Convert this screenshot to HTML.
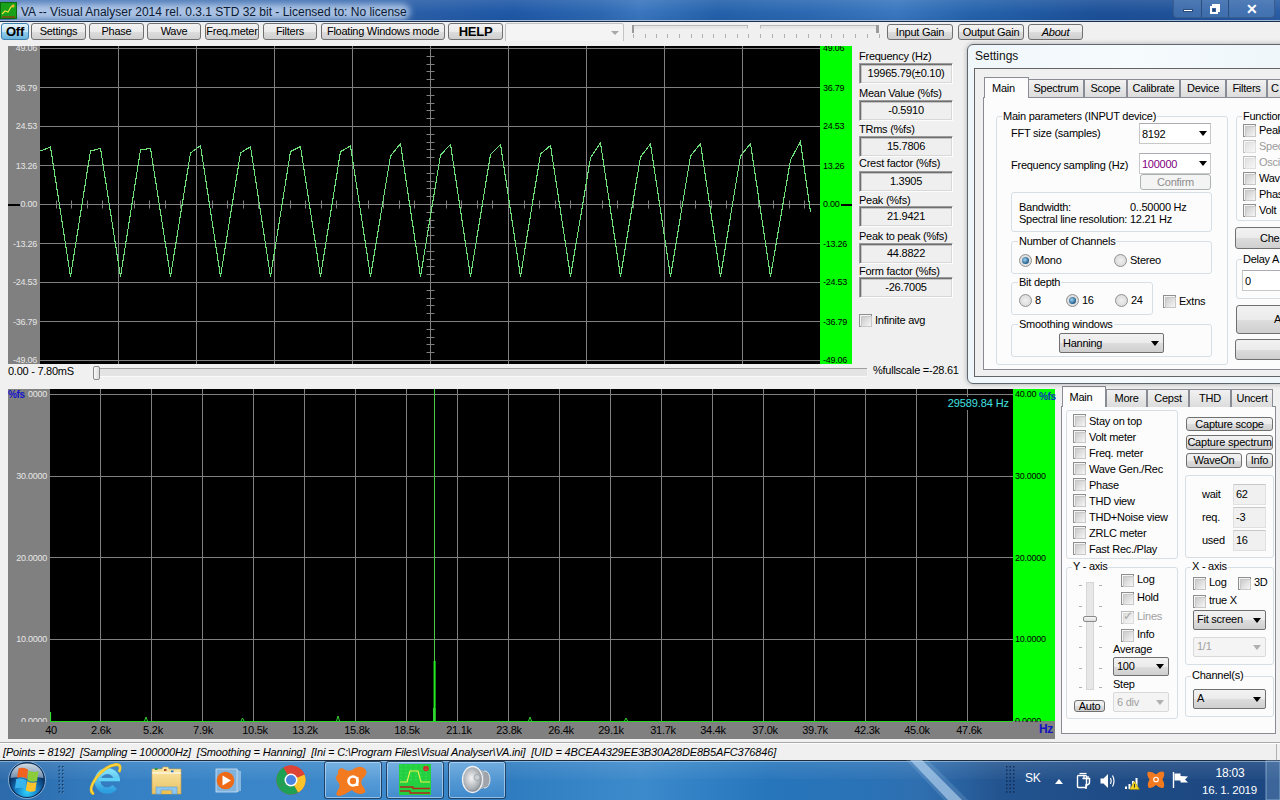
<!DOCTYPE html>
<html><head><meta charset="utf-8"><title>VA</title>
<style>
*{box-sizing:border-box;margin:0;padding:0}
html,body{width:1280px;height:800px;overflow:hidden;background:#f0f0f0;font-family:"Liberation Sans",sans-serif;font-size:11px;letter-spacing:-0.25px;color:#000;position:relative}
.a{position:absolute}
.btn{position:absolute;border:1px solid #707070;border-radius:3px;background:linear-gradient(#f2f2f2 0%,#ebebeb 50%,#dddddd 51%,#cfcfcf 100%);text-align:center;font-size:11px;line-height:15px;white-space:nowrap;overflow:hidden}
.t{position:absolute;white-space:nowrap;transform:translateY(1px)}
.s2{transform:translateY(2px)}
.cb{position:absolute;width:13px;height:13px;border:1px solid #8e8f8f;background:linear-gradient(135deg,#f4f4f4,#f4f4f4)}
.cb::after{content:"";position:absolute;left:1px;top:1px;width:9px;height:9px;background:linear-gradient(135deg,#cbcbcb,#f6f6f6);border:1px solid #c8c8c8}
.box{position:absolute;border:1px solid #fdfdfd;border-top-color:#9a9a9a;border-left-color:#9a9a9a;background:#efefef;box-shadow:inset 1px 1px 0 #6e6e6e,inset 2px 2px 0 #c4c4c4,inset -1px -1px 0 #d8d8d8;text-align:center;font-size:11px}
.grp{position:absolute;border:1px solid #d5dfe5;border-radius:3px}
.combo{position:absolute;border:1px solid #acacac;border-radius:2px;background:linear-gradient(#f2f2f2,#e5e5e5);font-size:11px}
.tab{position:absolute;border:1px solid #898c95;border-bottom:none;background:linear-gradient(#f2f2f2,#dcdcdc);text-align:center;font-size:11px}
</style></head><body>
<div class="a" style="left:0;top:0;width:1280px;height:21px;background:linear-gradient(90deg,#4a78b8 0%,#3c6db0 20%,#2a5fa8 32%,#1f58a6 40%,#2d68b2 47%,#3a76be 50%,#2461ab 56%,#2c69b2 63%,#3977bf 70%,#2563ac 76%,#1c5099 86%,#1f5299 92%,#2a5da4 100%)"></div>
<div class="a" style="left:0;top:0;width:1280px;height:21px;background:linear-gradient(rgba(255,255,255,0.10),rgba(255,255,255,0) 60%,rgba(0,0,0,0.05))"></div>
<div class="a" style="left:12px;top:4px;width:398px;height:16px;border-radius:8px;background:rgba(205,222,244,0.75);filter:blur(3px)"></div>
<div class="a" style="left:0;top:21px;width:1280px;height:1px;background:#1b2f4e"></div>
<div class="a" style="left:0;top:20px;width:1280px;height:1px;background:#9fb9d8"></div>
<svg class="a" style="left:0;top:2px" width="17" height="17"><rect x="0" y="0" width="17" height="17" fill="#1aa11a"/><rect x="0.5" y="0.5" width="16" height="16" fill="none" stroke="#0b6a0b"/><path d="M2 12L5 9L8 10L11 5L14 3" stroke="#e8e040" stroke-width="1.2" fill="none"/><path d="M2 15H15" stroke="#a03010" stroke-width="1.2"/><circle cx="13" cy="4" r="1.5" fill="#ffb030"/></svg>
<div class="t" style="left:21px;top:4px;font-size:12px;line-height:14px;letter-spacing:0;color:#0a1a33">VA -- Visual Analyser 2014 rel. 0.3.1 STD 32 bit - Licensed to: No license</div>
<div class="a" style="left:1173px;top:0;width:102px;height:18px;border:1px solid #3a5d8f;border-top:none;border-radius:0 0 4px 4px;background:rgba(120,160,210,0.35)"></div>
<div class="a" style="left:1201px;top:0;width:1px;height:17px;background:#2c4d7c"></div>
<div class="a" style="left:1228px;top:0;width:1px;height:17px;background:#2c4d7c"></div>
<div class="a" style="left:1183px;top:9px;width:10px;height:3px;background:#fff;border:1px solid #2a4a78"></div>
<div class="a" style="left:1212px;top:4px;width:8px;height:8px;border:2px solid #fff;border-left-width:2px"></div><div class="a" style="left:1210px;top:6px;width:8px;height:8px;border:2px solid #fff;background:#3a66a0"></div><div class="a" style="left:1213px;top:9px;width:2px;height:2px;background:#1d3d66"></div>
<div class="t" style="left:1246px;top:0px;font-size:14px;font-weight:bold;color:#fff;letter-spacing:0">✕</div>
<div class="btn" style="left:1px;top:23px;width:28px;height:17px;border-color:#3c7fb1;background:linear-gradient(#e5f4fc 0%,#c4e5f6 50%,#98d1ef 51%,#68b3db 100%);font-weight:bold;font-size:13px;line-height:15px">Off</div>
<div class="btn" style="left:31px;top:23px;width:55px;height:17px">Settings</div>
<div class="btn" style="left:89px;top:23px;width:55px;height:17px">Phase</div>
<div class="btn" style="left:147px;top:23px;width:54px;height:17px">Wave</div>
<div class="btn" style="left:205px;top:23px;width:54px;height:17px">Freq.meter</div>
<div class="btn" style="left:263px;top:23px;width:54px;height:17px">Filters</div>
<div class="btn" style="left:321px;top:23px;width:124px;height:17px">Floating Windows mode</div>
<div class="btn" style="left:448px;top:23px;width:55px;height:17px;font-weight:bold;font-size:13px">HELP</div>
<div class="a" style="left:505px;top:23px;width:119px;height:20px;border:1px solid #c3c3c3;border-radius:2px;background:#f4f4f4"></div>
<div class="a" style="left:611px;top:31px;width:0;height:0;border-left:4px solid transparent;border-right:4px solid transparent;border-top:4px solid #a8a8a8"></div>
<div class="a" style="left:633px;top:25px;width:115px;height:4px;border:1px solid #b8b8b8;border-bottom-color:#e8e8e8;background:#e6e6e6"></div>
<div class="a" style="left:633px;top:34px;width:1px;height:4px;background:#b0b0b0"></div>
<div class="a" style="left:645px;top:34px;width:1px;height:4px;background:#b0b0b0"></div>
<div class="a" style="left:656px;top:34px;width:1px;height:4px;background:#b0b0b0"></div>
<div class="a" style="left:667px;top:34px;width:1px;height:4px;background:#b0b0b0"></div>
<div class="a" style="left:679px;top:34px;width:1px;height:4px;background:#b0b0b0"></div>
<div class="a" style="left:691px;top:34px;width:1px;height:4px;background:#b0b0b0"></div>
<div class="a" style="left:702px;top:34px;width:1px;height:4px;background:#b0b0b0"></div>
<div class="a" style="left:713px;top:34px;width:1px;height:4px;background:#b0b0b0"></div>
<div class="a" style="left:725px;top:34px;width:1px;height:4px;background:#b0b0b0"></div>
<div class="a" style="left:737px;top:34px;width:1px;height:4px;background:#b0b0b0"></div>
<div class="a" style="left:748px;top:34px;width:1px;height:4px;background:#b0b0b0"></div>
<div class="a" style="left:760px;top:25px;width:119px;height:4px;border:1px solid #b8b8b8;border-bottom-color:#e8e8e8;background:#e6e6e6"></div>
<div class="a" style="left:760px;top:34px;width:1px;height:4px;background:#b0b0b0"></div>
<div class="a" style="left:772px;top:34px;width:1px;height:4px;background:#b0b0b0"></div>
<div class="a" style="left:784px;top:34px;width:1px;height:4px;background:#b0b0b0"></div>
<div class="a" style="left:796px;top:34px;width:1px;height:4px;background:#b0b0b0"></div>
<div class="a" style="left:808px;top:34px;width:1px;height:4px;background:#b0b0b0"></div>
<div class="a" style="left:820px;top:34px;width:1px;height:4px;background:#b0b0b0"></div>
<div class="a" style="left:831px;top:34px;width:1px;height:4px;background:#b0b0b0"></div>
<div class="a" style="left:843px;top:34px;width:1px;height:4px;background:#b0b0b0"></div>
<div class="a" style="left:855px;top:34px;width:1px;height:4px;background:#b0b0b0"></div>
<div class="a" style="left:867px;top:34px;width:1px;height:4px;background:#b0b0b0"></div>
<div class="a" style="left:879px;top:34px;width:1px;height:4px;background:#b0b0b0"></div>
<div class="a" style="left:632px;top:25px;width:2px;height:8px;background:#9a9a9a"></div>
<div class="a" style="left:876px;top:25px;width:3px;height:8px;background:#9a9a9a"></div>
<div class="btn" style="left:887px;top:24px;width:66px;height:16px;line-height:14px">Input Gain</div>
<div class="btn" style="left:958px;top:24px;width:66px;height:16px;line-height:14px">Output Gain</div>
<div class="btn" style="left:1028px;top:24px;width:55px;height:16px;line-height:14px;font-style:italic">About</div>
<div class="a" style="left:8px;top:46px;width:32px;height:318px;background:#808080"></div>
<div class="a" style="left:820px;top:46px;width:32px;height:318px;background:#00ff00"></div>
<svg class="a" style="left:40px;top:46px" width="780" height="318" viewBox="40 46 780 318"><rect x="40" y="46" width="780" height="318" fill="#000"/><path d="M40 48.5H820M40 87.5H820M40 126.5H820M40 165.5H820M40 204.5H820M40 243.5H820M40 282.5H820M40 321.5H820M40 360.5H820M118.5 46V364M196.5 46V364M274.5 46V364M352.5 46V364M430.5 46V364M508.5 46V364M586.5 46V364M664.5 46V364M742.5 46V364M56.5 200.5V208.5M71.5 200.5V208.5M87.5 200.5V208.5M102.5 200.5V208.5M134.5 200.5V208.5M149.5 200.5V208.5M165.5 200.5V208.5M180.5 200.5V208.5M212.5 200.5V208.5M227.5 200.5V208.5M243.5 200.5V208.5M258.5 200.5V208.5M290.5 200.5V208.5M305.5 200.5V208.5M321.5 200.5V208.5M336.5 200.5V208.5M368.5 200.5V208.5M383.5 200.5V208.5M399.5 200.5V208.5M414.5 200.5V208.5M446.5 200.5V208.5M461.5 200.5V208.5M477.5 200.5V208.5M492.5 200.5V208.5M524.5 200.5V208.5M539.5 200.5V208.5M555.5 200.5V208.5M570.5 200.5V208.5M602.5 200.5V208.5M617.5 200.5V208.5M633.5 200.5V208.5M648.5 200.5V208.5M680.5 200.5V208.5M695.5 200.5V208.5M711.5 200.5V208.5M726.5 200.5V208.5M758.5 200.5V208.5M773.5 200.5V208.5M789.5 200.5V208.5M804.5 200.5V208.5M426.5 56.5H434.5M426.5 64.5H434.5M426.5 71.5H434.5M426.5 79.5H434.5M426.5 95.5H434.5M426.5 103.5H434.5M426.5 110.5H434.5M426.5 118.5H434.5M426.5 134.5H434.5M426.5 142.5H434.5M426.5 149.5H434.5M426.5 157.5H434.5M426.5 173.5H434.5M426.5 181.5H434.5M426.5 188.5H434.5M426.5 196.5H434.5M426.5 212.5H434.5M426.5 220.5H434.5M426.5 227.5H434.5M426.5 235.5H434.5M426.5 251.5H434.5M426.5 259.5H434.5M426.5 266.5H434.5M426.5 274.5H434.5M426.5 290.5H434.5M426.5 298.5H434.5M426.5 305.5H434.5M426.5 313.5H434.5M426.5 329.5H434.5M426.5 337.5H434.5M426.5 344.5H434.5M426.5 352.5H434.5" stroke="#808080" stroke-width="1" fill="none"/><path d="M40.5 151.0 L50.5 147.0 L70.5 276.5 L90.5 151.0 L100.5 148.4 L120.5 276.5 L140.5 150.0 L150.5 148.4 L170.5 276.5 L190.5 153.0 L200.5 145.6 L220.5 276.5 L240.5 153.0 L250.5 146.6 L270.5 276.5 L290.5 151.6 L300.5 146.6 L320.5 276.5 L340.5 151.6 L350.5 146.0 L370.5 276.5 L390.5 156.0 L400.5 143.6 L420.5 276.5 L440.5 155.0 L450.5 144.4 L470.5 276.5 L490.5 154.4 L500.5 144.4 L520.5 276.5 L540.5 154.0 L550.5 145.4 L570.5 276.5 L590.5 158.0 L600.5 143.0 L620.5 276.5 L640.5 157.0 L650.5 144.0 L670.5 276.5 L690.5 156.0 L700.5 143.6 L720.5 276.5 L740.5 156.0 L750.5 143.6 L770.5 276.5 L790.5 160.0 L800.5 141.6 L810.5 212.0" stroke="#6ee07a" stroke-width="1.1" fill="none" stroke-linejoin="miter" shape-rendering="crispEdges"/></svg>
<div class="t" style="left:0;width:37px;text-align:right;top:42px;font-size:9px;line-height:11px;color:#e6e6e6">49.06</div>
<div class="t" style="left:823px;top:42px;font-size:9px;line-height:11px;color:#000">49.06</div>
<div class="t" style="left:0;width:37px;text-align:right;top:82px;font-size:9px;line-height:11px;color:#e6e6e6">36.79</div>
<div class="t" style="left:823px;top:82px;font-size:9px;line-height:11px;color:#000">36.79</div>
<div class="t" style="left:0;width:37px;text-align:right;top:120px;font-size:9px;line-height:11px;color:#e6e6e6">24.53</div>
<div class="t" style="left:823px;top:120px;font-size:9px;line-height:11px;color:#000">24.53</div>
<div class="t" style="left:0;width:37px;text-align:right;top:160px;font-size:9px;line-height:11px;color:#e6e6e6">13.26</div>
<div class="t" style="left:823px;top:160px;font-size:9px;line-height:11px;color:#000">13.26</div>
<div class="t" style="left:0;width:37px;text-align:right;top:198px;font-size:9px;line-height:11px;color:#e6e6e6">0.00</div>
<div class="t" style="left:823px;top:198px;font-size:9px;line-height:11px;color:#000">0.00</div>
<div class="t" style="left:0;width:37px;text-align:right;top:238px;font-size:9px;line-height:11px;color:#e6e6e6">-13.26</div>
<div class="t" style="left:823px;top:238px;font-size:9px;line-height:11px;color:#000">-13.26</div>
<div class="t" style="left:0;width:37px;text-align:right;top:276px;font-size:9px;line-height:11px;color:#e6e6e6">-24.53</div>
<div class="t" style="left:823px;top:276px;font-size:9px;line-height:11px;color:#000">-24.53</div>
<div class="t" style="left:0;width:37px;text-align:right;top:316px;font-size:9px;line-height:11px;color:#e6e6e6">-36.79</div>
<div class="t" style="left:823px;top:316px;font-size:9px;line-height:11px;color:#000">-36.79</div>
<div class="t" style="left:0;width:37px;text-align:right;top:354px;font-size:9px;line-height:11px;color:#e6e6e6">-49.06</div>
<div class="t" style="left:823px;top:354px;font-size:9px;line-height:11px;color:#000">-49.06</div>
<div class="a" style="left:0;top:41px;width:860px;height:5px;background:#f0f0f0"></div>
<div class="a" style="left:0;top:364px;width:860px;height:2px;background:#f0f0f0"></div>
<div class="a" style="left:8px;top:204px;width:12px;height:2px;background:#000"></div>
<div class="a" style="left:841px;top:204px;width:11px;height:2px;background:#000"></div>
<div class="t" style="left:8px;top:364px;font-size:11px;line-height:13px">0.00 - 7.80mS</div>
<div class="a" style="left:96px;top:368px;width:771px;height:9px;border-top:1px solid #a0a0a0;background:#e4e4e4;border-bottom:1px solid #fafafa"></div>
<div class="a" style="left:93px;top:366px;width:7px;height:14px;border:1px solid #8a8a8a;border-radius:2px;background:linear-gradient(90deg,#f8f8f8,#dcdcdc)"></div>
<div class="t" style="left:873px;top:363px;font-size:11px;line-height:13px">%fullscale =-28.61</div>
<div class="a" style="left:8px;top:389px;width:42px;height:350px;background:#808080"></div>
<div class="a" style="left:50px;top:721px;width:1005px;height:18px;background:#808080"></div>
<div class="a" style="left:1013px;top:389px;width:42px;height:332px;background:#00ff00"></div>
<svg class="a" style="left:50px;top:389px" width="963" height="333" viewBox="50 389 963 333"><rect x="50" y="389" width="963" height="333" fill="#000"/><path d="M50 394.5H1013M50 476.5H1013M50 557.5H1013M50 639.5H1013M100.5 389V721M151.5 389V721M202.5 389V721M253.5 389V721M304.5 389V721M355.5 389V721M406.5 389V721M457.5 389V721M508.5 389V721M559.5 389V721M610.5 389V721M661.5 389V721M712.5 389V721M763.5 389V721M814.5 389V721M865.5 389V721M916.5 389V721M967.5 389V721" stroke="#808080" stroke-width="1" fill="none"/><path d="M50 721.5H1013" stroke="#22dd22" stroke-width="1.2" fill="none"/><path d="M434.5 389V721" stroke="#44cc44" stroke-width="1" fill="none"/><path d="M434.6 661V721" stroke="#22ee22" stroke-width="2" fill="none"/><path d="M433.5 721V708H435V721" stroke="#33cc33" stroke-width="1" fill="none"/><path d="M50.5 712V721" stroke="#33dd33" stroke-width="1.2" fill="none"/><path d="M144.5 721L146 717L147.5 721" stroke="#33cc33" stroke-width="1" fill="none"/><path d="M241.0 721L242.5 718L244.0 721" stroke="#33cc33" stroke-width="1" fill="none"/><path d="M336.5 721L338 716L339.5 721" stroke="#33cc33" stroke-width="1" fill="none"/><path d="M528.5 721L530 717L531.5 721" stroke="#33cc33" stroke-width="1" fill="none"/><path d="M624.5 721L626 718L627.5 721" stroke="#33cc33" stroke-width="1" fill="none"/></svg>
<div class="t" style="left:0;width:47px;text-align:right;top:388px;font-size:9px;line-height:11px;color:#e6e6e6">0000</div>
<div class="t" style="left:0;width:47px;text-align:right;top:470px;font-size:9px;line-height:11px;color:#e6e6e6">30.0000</div>
<div class="t" style="left:0;width:47px;text-align:right;top:552px;font-size:9px;line-height:11px;color:#e6e6e6">20.0000</div>
<div class="t" style="left:0;width:47px;text-align:right;top:633px;font-size:9px;line-height:11px;color:#e6e6e6">10.0000</div>
<div class="a" style="left:8px;top:713px;width:42px;height:9px;overflow:hidden"><div class="t" style="left:-8px;width:47px;text-align:right;top:2px;font-size:9px;line-height:11px;color:#e6e6e6">0.0000</div></div>
<div class="t" style="left:1015px;top:388px;font-size:9px;line-height:11px;color:#000">40.00</div>
<div class="t" style="left:1015px;top:470px;font-size:9px;line-height:11px;color:#000">30.0000</div>
<div class="t" style="left:1015px;top:552px;font-size:9px;line-height:11px;color:#000">20.0000</div>
<div class="t" style="left:1015px;top:633px;font-size:9px;line-height:11px;color:#000">10.0000</div>
<div class="a" style="left:1013px;top:713px;width:42px;height:9px;overflow:hidden"><div class="t" style="left:2px;top:2px;font-size:9px;line-height:11px;color:#000">0.0000</div></div>
<div class="t" style="left:8px;top:388px;font-size:10px;font-weight:bold;color:#1414c8;line-height:12px;background:#808080;letter-spacing:-0.3px">%fs</div>
<div class="t" style="left:1039px;top:390px;font-size:10px;font-weight:bold;color:#1030b8;line-height:12px;letter-spacing:-0.4px">%fs</div>
<div class="t" style="left:947px;top:396px;width:62px;text-align:right;font-size:11px;line-height:13px;color:#40e0e0;background:#000;letter-spacing:-0.1px">29589.84 Hz</div>
<div class="t" style="left:26px;width:50px;text-align:center;top:723px;font-size:11px;line-height:13px;color:#000">40</div>
<div class="t" style="left:76px;width:50px;text-align:center;top:723px;font-size:11px;line-height:13px;color:#000">2.6k</div>
<div class="t" style="left:128px;width:50px;text-align:center;top:723px;font-size:11px;line-height:13px;color:#000">5.2k</div>
<div class="t" style="left:178px;width:50px;text-align:center;top:723px;font-size:11px;line-height:13px;color:#000">7.9k</div>
<div class="t" style="left:230px;width:50px;text-align:center;top:723px;font-size:11px;line-height:13px;color:#000">10.5k</div>
<div class="t" style="left:280px;width:50px;text-align:center;top:723px;font-size:11px;line-height:13px;color:#000">13.2k</div>
<div class="t" style="left:332px;width:50px;text-align:center;top:723px;font-size:11px;line-height:13px;color:#000">15.8k</div>
<div class="t" style="left:382px;width:50px;text-align:center;top:723px;font-size:11px;line-height:13px;color:#000">18.5k</div>
<div class="t" style="left:434px;width:50px;text-align:center;top:723px;font-size:11px;line-height:13px;color:#000">21.1k</div>
<div class="t" style="left:484px;width:50px;text-align:center;top:723px;font-size:11px;line-height:13px;color:#000">23.8k</div>
<div class="t" style="left:536px;width:50px;text-align:center;top:723px;font-size:11px;line-height:13px;color:#000">26.4k</div>
<div class="t" style="left:586px;width:50px;text-align:center;top:723px;font-size:11px;line-height:13px;color:#000">29.1k</div>
<div class="t" style="left:638px;width:50px;text-align:center;top:723px;font-size:11px;line-height:13px;color:#000">31.7k</div>
<div class="t" style="left:688px;width:50px;text-align:center;top:723px;font-size:11px;line-height:13px;color:#000">34.4k</div>
<div class="t" style="left:740px;width:50px;text-align:center;top:723px;font-size:11px;line-height:13px;color:#000">37.0k</div>
<div class="t" style="left:790px;width:50px;text-align:center;top:723px;font-size:11px;line-height:13px;color:#000">39.7k</div>
<div class="t" style="left:842px;width:50px;text-align:center;top:723px;font-size:11px;line-height:13px;color:#000">42.3k</div>
<div class="t" style="left:892px;width:50px;text-align:center;top:723px;font-size:11px;line-height:13px;color:#000">45.0k</div>
<div class="t" style="left:944px;width:50px;text-align:center;top:723px;font-size:11px;line-height:13px;color:#000">47.6k</div>
<div class="t" style="left:1039px;top:721px;font-size:12px;font-weight:bold;line-height:14px;color:#1212c0;letter-spacing:-0.3px">Hz</div>
<div class="a" style="left:0;top:383px;width:1060px;height:6px;background:#f0f0f0"></div>
<div class="t" style="left:859px;top:49px;font-size:11px;line-height:13px">Frequency (Hz)</div>
<div class="box" style="left:859px;top:63px;width:94px;height:21px;line-height:19px">19965.79(±0.10)</div>
<div class="t" style="left:859px;top:86px;font-size:11px;line-height:13px">Mean Value (%fs)</div>
<div class="box" style="left:859px;top:100px;width:94px;height:21px;line-height:19px">-0.5910</div>
<div class="t" style="left:859px;top:122px;font-size:11px;line-height:13px">TRms (%fs)</div>
<div class="box" style="left:859px;top:136px;width:94px;height:21px;line-height:19px">15.7806</div>
<div class="t" style="left:859px;top:156px;font-size:11px;line-height:13px">Crest factor (%fs)</div>
<div class="box" style="left:859px;top:171px;width:94px;height:21px;line-height:19px">1.3905</div>
<div class="t" style="left:859px;top:193px;font-size:11px;line-height:13px">Peak (%fs)</div>
<div class="box" style="left:859px;top:206px;width:94px;height:21px;line-height:19px">21.9421</div>
<div class="t" style="left:859px;top:229px;font-size:11px;line-height:13px">Peak to peak (%fs)</div>
<div class="box" style="left:859px;top:243px;width:94px;height:21px;line-height:19px">44.8822</div>
<div class="t" style="left:859px;top:264px;font-size:11px;line-height:13px">Form factor (%fs)</div>
<div class="box" style="left:859px;top:277px;width:94px;height:21px;line-height:19px">-26.7005</div>
<div class="cb" style="left:859px;top:314px"></div>
<div class="t" style="left:875px;top:313px;font-size:11px;line-height:13px">Infinite avg</div>
<div class="a" style="left:1061px;top:406px;width:215px;height:328px;border:1px solid #898c95;background:#fcfcfc"></div>
<div class="tab" style="left:1106px;top:389px;width:41px;height:18px;line-height:17px">More</div>
<div class="tab" style="left:1147px;top:389px;width:42px;height:18px;line-height:17px">Cepst</div>
<div class="tab" style="left:1189px;top:389px;width:42px;height:18px;line-height:17px">THD</div>
<div class="tab" style="left:1231px;top:389px;width:42px;height:18px;line-height:17px">Uncert</div>
<div class="tab" style="left:1062px;top:386px;width:44px;height:21px;line-height:20px;background:#fcfcfc;padding-right:6px">Main</div>
<div class="grp" style="left:1066px;top:410px;width:112px;height:149px"></div>
<div class="cb" style="left:1073px;top:414px"></div>
<div class="t" style="left:1089px;top:414px;font-size:11px;line-height:13px">Stay on top</div>
<div class="cb" style="left:1073px;top:430px"></div>
<div class="t" style="left:1089px;top:430px;font-size:11px;line-height:13px">Volt meter</div>
<div class="cb" style="left:1073px;top:446px"></div>
<div class="t" style="left:1089px;top:446px;font-size:11px;line-height:13px">Freq. meter</div>
<div class="cb" style="left:1073px;top:462px"></div>
<div class="t" style="left:1089px;top:462px;font-size:11px;line-height:13px">Wave Gen./Rec</div>
<div class="cb" style="left:1073px;top:478px"></div>
<div class="t" style="left:1089px;top:478px;font-size:11px;line-height:13px">Phase</div>
<div class="cb" style="left:1073px;top:494px"></div>
<div class="t" style="left:1089px;top:494px;font-size:11px;line-height:13px">THD view</div>
<div class="cb" style="left:1073px;top:510px"></div>
<div class="t" style="left:1089px;top:510px;font-size:11px;line-height:13px">THD+Noise view</div>
<div class="cb" style="left:1073px;top:526px"></div>
<div class="t" style="left:1089px;top:526px;font-size:11px;line-height:13px">ZRLC meter</div>
<div class="cb" style="left:1073px;top:542px"></div>
<div class="t" style="left:1089px;top:542px;font-size:11px;line-height:13px">Fast Rec./Play</div>
<div class="btn" style="left:1186px;top:417px;width:87px;height:14px;line-height:12px">Capture scope</div>
<div class="btn" style="left:1186px;top:435px;width:87px;height:15px;line-height:13px;letter-spacing:-0.2px">Capture spectrum</div>
<div class="btn" style="left:1186px;top:453px;width:56px;height:15px;line-height:13px">WaveOn</div>
<div class="btn" style="left:1246px;top:453px;width:27px;height:15px;line-height:13px">Info</div>
<div class="grp" style="left:1185px;top:475px;width:89px;height:83px"></div>
<div class="t" style="left:1202px;top:487px;font-size:11px;line-height:13px">wait</div>
<div class="a" style="left:1233px;top:484px;width:33px;height:21px;border:1px solid #e0e0e0;border-top-color:#c8c8c8;background:#f0f0f0"></div>
<div class="t" style="left:1236px;top:487px;font-size:11px;line-height:13px">62</div>
<div class="t" style="left:1202px;top:510px;font-size:11px;line-height:13px">req.</div>
<div class="a" style="left:1233px;top:507px;width:33px;height:21px;border:1px solid #e0e0e0;border-top-color:#c8c8c8;background:#f0f0f0"></div>
<div class="t" style="left:1236px;top:510px;font-size:11px;line-height:13px">-3</div>
<div class="t" style="left:1202px;top:533px;font-size:11px;line-height:13px">used</div>
<div class="a" style="left:1233px;top:530px;width:33px;height:21px;border:1px solid #e0e0e0;border-top-color:#c8c8c8;background:#f0f0f0"></div>
<div class="t" style="left:1236px;top:533px;font-size:11px;line-height:13px">16</div>
<div class="grp" style="left:1066px;top:567px;width:112px;height:152px"></div>
<div class="t" style="left:1072px;top:559px;font-size:11px;line-height:13px;background:#fcfcfc;padding:0 1px">Y - axis</div>
<div class="a" style="left:1086px;top:582px;width:8px;height:108px;border:1px solid #d6d6d6;background:#e7e7e7"></div>
<div class="a" style="left:1079px;top:585px;width:3px;height:1px;background:#b0b0b0"></div>
<div class="a" style="left:1099px;top:585px;width:3px;height:1px;background:#b0b0b0"></div>
<div class="a" style="left:1079px;top:606px;width:3px;height:1px;background:#b0b0b0"></div>
<div class="a" style="left:1099px;top:606px;width:3px;height:1px;background:#b0b0b0"></div>
<div class="a" style="left:1079px;top:626px;width:3px;height:1px;background:#b0b0b0"></div>
<div class="a" style="left:1099px;top:626px;width:3px;height:1px;background:#b0b0b0"></div>
<div class="a" style="left:1079px;top:647px;width:3px;height:1px;background:#b0b0b0"></div>
<div class="a" style="left:1099px;top:647px;width:3px;height:1px;background:#b0b0b0"></div>
<div class="a" style="left:1079px;top:668px;width:3px;height:1px;background:#b0b0b0"></div>
<div class="a" style="left:1099px;top:668px;width:3px;height:1px;background:#b0b0b0"></div>
<div class="a" style="left:1079px;top:687px;width:3px;height:1px;background:#b0b0b0"></div>
<div class="a" style="left:1099px;top:687px;width:3px;height:1px;background:#b0b0b0"></div>
<div class="a" style="left:1083px;top:616px;width:14px;height:6px;border:1px solid #8a8a8a;border-radius:2px;background:linear-gradient(#f8f8f8,#dcdcdc)"></div>
<div class="btn" style="left:1074px;top:700px;width:31px;height:12px;line-height:11px">Auto</div>
<div class="cb" style="left:1121px;top:574px;"></div>
<div class="t" style="left:1137px;top:572px;font-size:11px;line-height:13px;color:#000">Log</div>
<div class="cb" style="left:1121px;top:592px;"></div>
<div class="t" style="left:1137px;top:590px;font-size:11px;line-height:13px;color:#000">Hold</div>
<div class="cb" style="left:1121px;top:611px;opacity:0.6"></div>
<div class="t" style="left:1123px;top:608px;font-size:12px;color:#a8a8a8">✓</div>
<div class="t" style="left:1137px;top:609px;font-size:11px;line-height:13px;color:#a0a0a0">Lines</div>
<div class="cb" style="left:1121px;top:629px;"></div>
<div class="t" style="left:1137px;top:627px;font-size:11px;line-height:13px;color:#000">Info</div>
<div class="t" style="left:1113px;top:642px;font-size:11px;line-height:13px">Average</div>
<div class="combo" style="left:1113px;top:657px;width:56px;height:19px;border-color:#707070;background:linear-gradient(#f2f2f2,#ebebeb 50%,#dddddd 51%,#cfcfcf)"></div>
<div class="t" style="left:1117px;top:659px;font-size:11px;line-height:13px">100</div>
<div class="a" style="left:1156px;top:664px;width:0;height:0;border-left:4px solid transparent;border-right:4px solid transparent;border-top:5px solid #000"></div>
<div class="t" style="left:1113px;top:677px;font-size:11px;line-height:13px">Step</div>
<div class="combo" style="left:1113px;top:692px;width:56px;height:20px;border-color:#d9d9d9;background:#f4f4f4"></div>
<div class="t" style="left:1117px;top:695px;font-size:11px;line-height:13px;color:#a0a0a0">6 div</div>
<div class="a" style="left:1156px;top:700px;width:0;height:0;border-left:4px solid transparent;border-right:4px solid transparent;border-top:5px solid #b0b0b0"></div>
<div class="grp" style="left:1185px;top:567px;width:89px;height:98px"></div>
<div class="t" style="left:1191px;top:559px;font-size:11px;line-height:13px;background:#fcfcfc;padding:0 1px">X - axis</div>
<div class="cb" style="left:1193px;top:577px"></div><div class="t" style="left:1209px;top:575px;font-size:11px;line-height:13px">Log</div>
<div class="cb" style="left:1238px;top:577px"></div><div class="t" style="left:1254px;top:575px;font-size:11px;line-height:13px">3D</div>
<div class="cb" style="left:1193px;top:595px"></div><div class="t" style="left:1209px;top:593px;font-size:11px;line-height:13px">true X</div>
<div class="combo" style="left:1193px;top:610px;width:73px;height:20px;border-color:#707070;background:linear-gradient(#f2f2f2,#ebebeb 50%,#dddddd 51%,#cfcfcf)"></div>
<div class="t" style="left:1197px;top:612px;font-size:11px;line-height:13px">Fit screen</div>
<div class="a" style="left:1253px;top:618px;width:0;height:0;border-left:4px solid transparent;border-right:4px solid transparent;border-top:5px solid #000"></div>
<div class="combo" style="left:1193px;top:637px;width:73px;height:20px;border-color:#d9d9d9;background:#f4f4f4"></div>
<div class="t" style="left:1197px;top:639px;font-size:11px;line-height:13px;color:#a0a0a0">1/1</div>
<div class="a" style="left:1253px;top:645px;width:0;height:0;border-left:4px solid transparent;border-right:4px solid transparent;border-top:5px solid #b0b0b0"></div>
<div class="grp" style="left:1185px;top:676px;width:89px;height:41px"></div>
<div class="t" style="left:1191px;top:668px;font-size:11px;line-height:13px;background:#fcfcfc;padding:0 1px">Channel(s)</div>
<div class="combo" style="left:1193px;top:689px;width:73px;height:20px;border-color:#707070;background:linear-gradient(#f2f2f2,#ebebeb 50%,#dddddd 51%,#cfcfcf)"></div>
<div class="t" style="left:1197px;top:691px;font-size:11px;line-height:13px">A</div>
<div class="a" style="left:1253px;top:697px;width:0;height:0;border-left:4px solid transparent;border-right:4px solid transparent;border-top:5px solid #000"></div>
<div class="a" style="left:0;top:742px;width:1280px;height:1px;background:#a9a9a9"></div><div class="a" style="left:0;top:743px;width:1280px;height:1px;background:#fdfdfd"></div><div class="a" style="left:1276px;top:744px;width:1px;height:16px;background:#b0b0b0"></div>
<div class="t" style="left:3px;top:744px;font-size:11px;line-height:14px;font-style:italic;letter-spacing:-0.17px">[Points = 8192]&nbsp; [Sampling = 100000Hz]&nbsp; [Smoothing = Hanning]&nbsp; [Ini = C:\Program Files\Visual Analyser\VA.ini]&nbsp; [UID = 4BCEA4329EE3B30A28DE8B5AFC376846]</div>
<div class="a" style="left:0;top:760px;width:1280px;height:40px;background:linear-gradient(90deg,#2c6aaa 0%,#3580c4 10%,#3a86c8 20%,#3b88ca 30%,#2f7cc0 40%,#3d8acb 50%,#3382c6 54%,#2775bb 60%,#2a72b6 68%,#2f6fb0 72%,#23548f 78%,#1f4c86 86%,#1c4680 100%)"></div>
<div class="a" style="left:0;top:760px;width:1280px;height:1px;background:#1e2c40"></div>
<div class="a" style="left:0;top:761px;width:1280px;height:1px;background:rgba(200,225,245,0.55)"></div>
<div class="a" style="left:0;top:762px;width:1280px;height:17px;background:linear-gradient(rgba(255,255,255,0.10),rgba(255,255,255,0.02))"></div>
<svg class="a" style="left:0;top:760px" width="1280" height="40"><path d="M910 0L922 0L962 40L948 40Z" fill="rgba(200,225,250,0.55)"/><path d="M906 0L928 0L968 40L944 40Z" fill="rgba(200,225,250,0.15)"/></svg>
<div class="a" style="left:324px;top:761px;width:58px;height:38px;border:1px solid rgba(15,35,65,0.75);border-radius:3px;box-shadow:inset 0 0 0 1px rgba(200,228,250,0.6);background:linear-gradient(rgba(150,200,240,0.55),rgba(80,150,215,0.4))"></div>
<div class="a" style="left:386px;top:761px;width:58px;height:38px;border:1px solid rgba(15,35,65,0.75);border-radius:3px;box-shadow:inset 0 0 0 1px rgba(200,228,250,0.6);background:linear-gradient(rgba(150,200,240,0.55),rgba(80,150,215,0.4))"></div>
<div class="a" style="left:448px;top:761px;width:58px;height:38px;border:1px solid rgba(15,35,65,0.75);border-radius:3px;box-shadow:inset 0 0 0 1px rgba(200,228,250,0.6);background:linear-gradient(rgba(150,200,240,0.55),rgba(80,150,215,0.4))"></div>
<svg class="a" style="left:0;top:760px" width="1280" height="40"><defs>
<radialGradient id="orb" cx="50%" cy="85%" r="60%"><stop offset="0" stop-color="#2fd4fb"/><stop offset="0.45" stop-color="#1a8ad0"/><stop offset="0.8" stop-color="#0e4f8e"/><stop offset="1" stop-color="#0b3466"/></radialGradient>
<linearGradient id="orbhi" x1="0" y1="0" x2="0" y2="1"><stop offset="0" stop-color="#d0dae4"/><stop offset="1" stop-color="#6d8aa8"/></linearGradient>
<linearGradient id="ieg" x1="0" y1="0" x2="0" y2="1"><stop offset="0" stop-color="#7fe0fa"/><stop offset="1" stop-color="#2e9fe0"/></linearGradient>
<linearGradient id="fold" x1="0" y1="0" x2="0" y2="1"><stop offset="0" stop-color="#fbe9a8"/><stop offset="1" stop-color="#e8c060"/></linearGradient>
<radialGradient id="spk" cx="45%" cy="45%" r="60%"><stop offset="0" stop-color="#f4f4f4"/><stop offset="0.7" stop-color="#a9aeb3"/><stop offset="1" stop-color="#6f757c"/></radialGradient>
</defs><circle cx="27" cy="20" r="18.5" fill="#0a2c55" stroke="#9cc4ea" stroke-width="1" stroke-opacity="0.8"/><circle cx="27" cy="20" r="17" fill="url(#orb)"/><path d="M10.5 18Q12 4 27 3.5Q42 4 43.5 18Q35 16 27 19Q19 16 10.5 18Z" fill="url(#orbhi)"/><path d="M18.5 8.5Q23.5 6.5 28 9.5L27 18.5Q22 16 17 17.8Z" fill="#f0621e"/><path d="M28.6 10.5Q33.5 13 38.5 11L37 21Q32.5 23 27.4 20.2Z" fill="#8bcc3a"/><path d="M16.2 19Q21.2 17.3 26.4 20.2L25.2 29Q20.3 26.6 15 28.5Z" fill="#3ab4ec"/><path d="M27.2 21.2Q32.2 24 36.6 22L35.3 31Q30.5 33 25.8 30.2Z" fill="#fdc22c"/><rect x="58.5" y="6.0" width="1.6" height="1.6" fill="#123a66"/><rect x="59.5" y="7.0" width="1" height="1" fill="#8ab8e0" opacity="0.6"/><rect x="62.0" y="6.0" width="1.6" height="1.6" fill="#123a66"/><rect x="63.0" y="7.0" width="1" height="1" fill="#8ab8e0" opacity="0.6"/><rect x="58.5" y="9.6" width="1.6" height="1.6" fill="#123a66"/><rect x="59.5" y="10.6" width="1" height="1" fill="#8ab8e0" opacity="0.6"/><rect x="62.0" y="9.6" width="1.6" height="1.6" fill="#123a66"/><rect x="63.0" y="10.6" width="1" height="1" fill="#8ab8e0" opacity="0.6"/><rect x="58.5" y="13.2" width="1.6" height="1.6" fill="#123a66"/><rect x="59.5" y="14.2" width="1" height="1" fill="#8ab8e0" opacity="0.6"/><rect x="62.0" y="13.2" width="1.6" height="1.6" fill="#123a66"/><rect x="63.0" y="14.2" width="1" height="1" fill="#8ab8e0" opacity="0.6"/><rect x="58.5" y="16.8" width="1.6" height="1.6" fill="#123a66"/><rect x="59.5" y="17.8" width="1" height="1" fill="#8ab8e0" opacity="0.6"/><rect x="62.0" y="16.8" width="1.6" height="1.6" fill="#123a66"/><rect x="63.0" y="17.8" width="1" height="1" fill="#8ab8e0" opacity="0.6"/><rect x="58.5" y="20.4" width="1.6" height="1.6" fill="#123a66"/><rect x="59.5" y="21.4" width="1" height="1" fill="#8ab8e0" opacity="0.6"/><rect x="62.0" y="20.4" width="1.6" height="1.6" fill="#123a66"/><rect x="63.0" y="21.4" width="1" height="1" fill="#8ab8e0" opacity="0.6"/><rect x="58.5" y="24.0" width="1.6" height="1.6" fill="#123a66"/><rect x="59.5" y="25.0" width="1" height="1" fill="#8ab8e0" opacity="0.6"/><rect x="62.0" y="24.0" width="1.6" height="1.6" fill="#123a66"/><rect x="63.0" y="25.0" width="1" height="1" fill="#8ab8e0" opacity="0.6"/><rect x="58.5" y="27.6" width="1.6" height="1.6" fill="#123a66"/><rect x="59.5" y="28.6" width="1" height="1" fill="#8ab8e0" opacity="0.6"/><rect x="62.0" y="27.6" width="1.6" height="1.6" fill="#123a66"/><rect x="63.0" y="28.6" width="1" height="1" fill="#8ab8e0" opacity="0.6"/><rect x="58.5" y="31.2" width="1.6" height="1.6" fill="#123a66"/><rect x="59.5" y="32.2" width="1" height="1" fill="#8ab8e0" opacity="0.6"/><rect x="62.0" y="31.2" width="1.6" height="1.6" fill="#123a66"/><rect x="63.0" y="32.2" width="1" height="1" fill="#8ab8e0" opacity="0.6"/><path d="M114.8 27A9.8 9.8 0 1 1 117 20" fill="none" stroke="url(#ieg)" stroke-width="6"/><path d="M99 19.6H120" stroke="#5fd0f6" stroke-width="3.4"/><path d="M93 33.5Q88 30 96 18Q105 6 116 4.5Q122 4.5 119.5 11" fill="none" stroke="#f6c21e" stroke-width="2.8" stroke-linecap="round"/><path d="M93 33.5Q88 30 96 18Q105 6 116 4.5Q122 4.5 119.5 11" fill="none" stroke="#fff38a" stroke-width="0.8" stroke-linecap="round" opacity="0.7"/><path d="M152 9H162L163 7H168L169 9H181V34H152Z" fill="url(#fold)" stroke="#c9a04a" stroke-width="0.6"/><rect x="155" y="8" width="2.5" height="2" fill="#2a9a3a"/><rect x="164" y="9" width="2.5" height="2" fill="#b34a20"/><rect x="171" y="10.5" width="2.5" height="2" fill="#2a70c0"/><path d="M152 13H181" stroke="#fff" stroke-width="1"/><path d="M156 27V34H161V30H172V34H177V27Z" fill="#8ec7ee" stroke="#5b9fd0" stroke-width="0.6"/><rect x="162" y="31" width="9" height="3" fill="#f0c050"/><rect x="216" y="9" width="21" height="23" fill="#7fb3de" stroke="#cfe4f4" stroke-width="0.8"/><path d="M238 10V32M240 11V31" stroke="#d4e8f6" stroke-width="1"/><circle cx="225.5" cy="20.5" r="8.8" fill="#ee6a16"/><path d="M222.5 15.5L231 20.5L222.5 25.5Z" fill="#fff"/><circle cx="291" cy="20" r="14.5" fill="#dd4436"/><path d="M291 20L278.4 27.2A14.5 14.5 0 0 0 298.2 32.6Z" fill="#1ea055"/><path d="M291 20L298.2 32.6A14.5 14.5 0 0 0 304.5 14.5Z" fill="#fbc42a"/><path d="M291 20L278.4 27.2A14.5 14.5 0 0 1 283.5 7.6Z" fill="#1ea055"/><path d="M291 20L283.5 7.6A14.5 14.5 0 0 1 304.5 14.5Z" fill="#dd4436"/><circle cx="291" cy="20" r="6.5" fill="#fff"/><circle cx="291" cy="20" r="5" fill="#4a86e0"/><path d="M342 8Q347 12 352 10Q360 4 365 9Q369 13 363 18Q359 22 364 28Q368 33 361 34Q356 34 352 30Q346 34 340 36Q334 36 338 30Q341 25 338 22Q334 18 338 14Q337 9 342 8Z" fill="#f47a20"/><circle cx="353" cy="21" r="4.5" fill="none" stroke="#fff" stroke-width="2.6"/><path d="M357.2 17V26" stroke="#fff" stroke-width="2.4"/><rect x="399" y="4" width="32" height="31" fill="#22d040"/><path d="M400 22H407L410 11H418L421 22H430" stroke="#f2ef4a" stroke-width="1.2" fill="none"/><path d="M400 27H413V28.5H430M400 31H410V33H430" stroke="#b3261e" stroke-width="1.3" fill="none"/><circle cx="426" cy="8.5" r="2.8" fill="#d52a2a"/><path d="M401 5V21" stroke="#5ee87a" stroke-width="0.6" stroke-dasharray="1.5 2"/><path d="M406 5V21" stroke="#5ee87a" stroke-width="0.6" stroke-dasharray="1.5 2"/><path d="M411 5V21" stroke="#5ee87a" stroke-width="0.6" stroke-dasharray="1.5 2"/><path d="M416 5V21" stroke="#5ee87a" stroke-width="0.6" stroke-dasharray="1.5 2"/><path d="M421 5V21" stroke="#5ee87a" stroke-width="0.6" stroke-dasharray="1.5 2"/><path d="M426 5V21" stroke="#5ee87a" stroke-width="0.6" stroke-dasharray="1.5 2"/><ellipse cx="485" cy="19.5" rx="5" ry="8.5" fill="#9ea4aa" stroke="#e0e4e8" stroke-width="1"/><path d="M473 7L484 11V28L473 32Z" fill="#a9afb5"/><ellipse cx="472.5" cy="19.5" rx="10" ry="13" fill="url(#spk)" stroke="#eef0f2" stroke-width="1.3"/><circle cx="477" cy="17.5" r="3" fill="#c9ced3" stroke="#8d9399" stroke-width="0.6"/><text x="1025" y="22" font-family="Liberation Sans" font-size="12" fill="#fff">SK</text><path d="M1055 24L1059 19L1063 24Z" fill="#fff"/><rect x="1077.5" y="15.5" width="9" height="12" rx="1" fill="none" stroke="#fff" stroke-width="1.4"/><path d="M1079.5 13.5H1086.5" stroke="#fff" stroke-width="1.2"/><path d="M1082.5 18.5H1089.5V22Q1089.5 25 1086 25H1086V29" fill="none" stroke="#fff" stroke-width="1.5"/><path d="M1084 16V19M1088 16V19" stroke="#fff" stroke-width="1.3"/><path d="M1100.5 18.5H1103.5L1108 14V28L1103.5 23.5H1100.5Z" fill="#fff"/><path d="M1110.5 18Q1112 21 1110.5 24M1112.5 15.5Q1115.5 21 1112.5 26.5" stroke="#fff" stroke-width="1.2" fill="none"/><rect x="1125.0" y="26.5" width="2" height="2.5" fill="#fff"/><rect x="1128.5" y="24" width="2" height="5" fill="#fff"/><rect x="1132.0" y="21" width="2" height="8" fill="#fff"/><rect x="1135.5" y="18" width="2" height="11" fill="#fff"/><path d="M1129.5 29.5L1134.5 21L1139.5 29.5Z" fill="#f3d21c" stroke="#8a7a10" stroke-width="0.5"/><path d="M1134.5 24V27.5" stroke="#333" stroke-width="1"/><path d="M1148.5 12.5Q1152 12 1156 15.5Q1160 11.5 1163 12.5Q1164.5 15 1161.5 19.5Q1164.5 24 1163 27Q1160 28 1156 24Q1152 28 1149 27Q1147.5 24 1150.5 19.5Q1147 15 1148.5 12.5Z" fill="#f47a20" stroke="#f47a20" stroke-width="1.5" stroke-linejoin="round"/><circle cx="1156" cy="19.5" r="2.3" fill="none" stroke="#fff" stroke-width="1.1"/><path d="M1173.5 12V28" stroke="#fff" stroke-width="1.4"/><path d="M1174.5 13.5H1180.5V16L1188 16.5L1185 19.5L1188 22.5H1180.5V20.5H1174.5Z" fill="#fff"/><rect x="1006.0" y="6.0" width="1.5" height="1.5" fill="#0c2244" opacity="0.8"/><rect x="1009.5" y="6.0" width="1.5" height="1.5" fill="#0c2244" opacity="0.8"/><rect x="1013.0" y="6.0" width="1.5" height="1.5" fill="#0c2244" opacity="0.8"/><rect x="1006.0" y="9.6" width="1.5" height="1.5" fill="#0c2244" opacity="0.8"/><rect x="1009.5" y="9.6" width="1.5" height="1.5" fill="#0c2244" opacity="0.8"/><rect x="1013.0" y="9.6" width="1.5" height="1.5" fill="#0c2244" opacity="0.8"/><rect x="1006.0" y="13.2" width="1.5" height="1.5" fill="#0c2244" opacity="0.8"/><rect x="1009.5" y="13.2" width="1.5" height="1.5" fill="#0c2244" opacity="0.8"/><rect x="1013.0" y="13.2" width="1.5" height="1.5" fill="#0c2244" opacity="0.8"/><rect x="1006.0" y="16.8" width="1.5" height="1.5" fill="#0c2244" opacity="0.8"/><rect x="1009.5" y="16.8" width="1.5" height="1.5" fill="#0c2244" opacity="0.8"/><rect x="1013.0" y="16.8" width="1.5" height="1.5" fill="#0c2244" opacity="0.8"/><rect x="1006.0" y="20.4" width="1.5" height="1.5" fill="#0c2244" opacity="0.8"/><rect x="1009.5" y="20.4" width="1.5" height="1.5" fill="#0c2244" opacity="0.8"/><rect x="1013.0" y="20.4" width="1.5" height="1.5" fill="#0c2244" opacity="0.8"/><rect x="1006.0" y="24.0" width="1.5" height="1.5" fill="#0c2244" opacity="0.8"/><rect x="1009.5" y="24.0" width="1.5" height="1.5" fill="#0c2244" opacity="0.8"/><rect x="1013.0" y="24.0" width="1.5" height="1.5" fill="#0c2244" opacity="0.8"/><rect x="1006.0" y="27.6" width="1.5" height="1.5" fill="#0c2244" opacity="0.8"/><rect x="1009.5" y="27.6" width="1.5" height="1.5" fill="#0c2244" opacity="0.8"/><rect x="1013.0" y="27.6" width="1.5" height="1.5" fill="#0c2244" opacity="0.8"/><rect x="1006.0" y="31.2" width="1.5" height="1.5" fill="#0c2244" opacity="0.8"/><rect x="1009.5" y="31.2" width="1.5" height="1.5" fill="#0c2244" opacity="0.8"/><rect x="1013.0" y="31.2" width="1.5" height="1.5" fill="#0c2244" opacity="0.8"/><text x="1230" y="17" font-family="Liberation Sans" font-size="12" fill="#fff" text-anchor="middle">18:03</text><text x="1229.5" y="34" font-family="Liberation Sans" font-size="11.5" fill="#fff" text-anchor="middle">16. 1. 2019</text><rect x="1266" y="1" width="14" height="39" fill="rgba(120,160,200,0.35)" stroke="rgba(180,210,240,0.6)" stroke-width="1"/></svg>
<div class="a" style="left:967px;top:44px;width:330px;height:340px;border:1px solid #5e6670;border-radius:6px;background:linear-gradient(90deg,#f0f7fb,#f6fbfd 50%,#eef6fa);box-shadow:0 0 5px rgba(0,0,0,0.3)"></div>
<div class="t s2" style="left:975px;top:47px;font-size:12px;line-height:14px;color:#111;letter-spacing:0">Settings</div>
<div class="a" style="left:974px;top:68px;width:320px;height:309px;border:1px solid #646464;background:#f0f0f0"></div>
<div class="a" style="left:983px;top:97px;width:310px;height:273px;border:1px solid #898c95;background:#fcfcfc"></div>
<div class="tab" style="left:1028px;top:79px;width:56px;height:18px;line-height:17px;">Spectrum</div>
<div class="tab" style="left:1084px;top:79px;width:43px;height:18px;line-height:17px;">Scope</div>
<div class="tab" style="left:1127px;top:79px;width:53px;height:18px;line-height:17px;">Calibrate</div>
<div class="tab" style="left:1180px;top:79px;width:46px;height:18px;line-height:17px;">Device</div>
<div class="tab" style="left:1226px;top:79px;width:41px;height:18px;line-height:17px;">Filters</div>
<div class="tab" style="left:1267px;top:79px;width:33px;height:18px;line-height:17px;text-align:left;padding-left:3px;">C</div>
<div class="tab" style="left:984px;top:77px;width:45px;height:21px;line-height:20px;background:#fcfcfc;padding-right:6px">Main</div>
<div class="grp" style="left:996px;top:116px;width:232px;height:249px"></div>
<div class="t s2" style="left:1002px;top:108px;font-size:11px;line-height:13px;background:#fcfcfc;padding:0 1px">Main parameters (INPUT device)</div>
<div class="t s2" style="left:1011px;top:125px;font-size:11px;line-height:13px">FFT size (samples)</div>
<div class="a" style="left:1139px;top:123px;width:72px;height:21px;border:1px solid #c8c8c8;border-top-color:#abadb3;background:#fff"></div>
<div class="t s2" style="left:1142px;top:126px;font-size:11px;line-height:13px">8192</div>
<div class="a" style="left:1199px;top:131px;width:0;height:0;border-left:4px solid transparent;border-right:4px solid transparent;border-top:5px solid #000"></div>
<div class="t s2" style="left:1011px;top:157px;font-size:11px;line-height:13px">Frequency sampling (Hz)</div>
<div class="a" style="left:1139px;top:153px;width:72px;height:21px;border:1px solid #c8c8c8;border-top-color:#abadb3;background:#fff"></div>
<div class="t s2" style="left:1142px;top:156px;font-size:11px;line-height:13px;color:#800080">100000</div>
<div class="a" style="left:1199px;top:161px;width:0;height:0;border-left:4px solid transparent;border-right:4px solid transparent;border-top:5px solid #000"></div>
<div class="btn" style="left:1140px;top:174px;width:71px;height:16px;line-height:14px;color:#8d8d8d;border-color:#adb2b5;background:#f4f4f4">Confirm</div>
<div class="grp" style="left:1011px;top:192px;width:201px;height:40px"></div>
<div class="t s2" style="left:1019px;top:199px;font-size:11px;line-height:13px">Bandwidth:</div>
<div class="t s2" style="left:1130px;top:199px;font-size:11px;line-height:13px">0..50000 Hz</div>
<div class="t s2" style="left:1019px;top:211px;font-size:11px;line-height:13px">Spectral line resolution: 12.21 Hz</div>
<div class="grp" style="left:1011px;top:241px;width:201px;height:33px"></div>
<div class="t s2" style="left:1018px;top:233px;font-size:11px;line-height:13px;background:#fcfcfc;padding:0 1px">Number of Channels</div>
<div class="a" style="left:1019px;top:254px;width:13px;height:13px;border-radius:50%;border:1px solid #8e8f8f;background:radial-gradient(circle at 50% 50%,#f0f0f0,#d4d4d4)"><div class="a" style="left:2px;top:2px;width:7px;height:7px;border-radius:50%;background:radial-gradient(circle at 40% 40%,#9fd3f3,#1d5a88 70%)"></div></div>
<div class="t s2" style="left:1035px;top:252px;font-size:11px;line-height:13px">Mono</div>
<div class="a" style="left:1114px;top:254px;width:13px;height:13px;border-radius:50%;border:1px solid #8e8f8f;background:radial-gradient(circle at 50% 50%,#f0f0f0,#d4d4d4)"></div>
<div class="t s2" style="left:1130px;top:252px;font-size:11px;line-height:13px">Stereo</div>
<div class="grp" style="left:1011px;top:282px;width:142px;height:33px"></div>
<div class="t s2" style="left:1018px;top:274px;font-size:11px;line-height:13px;background:#fcfcfc;padding:0 1px">Bit depth</div>
<div class="a" style="left:1019px;top:294px;width:13px;height:13px;border-radius:50%;border:1px solid #8e8f8f;background:radial-gradient(circle at 50% 50%,#f0f0f0,#d4d4d4)"></div>
<div class="t s2" style="left:1035px;top:292px;font-size:11px;line-height:13px">8</div>
<div class="a" style="left:1066px;top:294px;width:13px;height:13px;border-radius:50%;border:1px solid #8e8f8f;background:radial-gradient(circle at 50% 50%,#f0f0f0,#d4d4d4)"><div class="a" style="left:2px;top:2px;width:7px;height:7px;border-radius:50%;background:radial-gradient(circle at 40% 40%,#9fd3f3,#1d5a88 70%)"></div></div>
<div class="t s2" style="left:1082px;top:292px;font-size:11px;line-height:13px">16</div>
<div class="a" style="left:1115px;top:294px;width:13px;height:13px;border-radius:50%;border:1px solid #8e8f8f;background:radial-gradient(circle at 50% 50%,#f0f0f0,#d4d4d4)"></div>
<div class="t s2" style="left:1131px;top:292px;font-size:11px;line-height:13px">24</div>
<div class="cb" style="left:1163px;top:295px"></div>
<div class="t s2" style="left:1179px;top:293px;font-size:11px;line-height:13px">Extns</div>
<div class="grp" style="left:1011px;top:324px;width:201px;height:33px"></div>
<div class="t s2" style="left:1018px;top:316px;font-size:11px;line-height:13px;background:#fcfcfc;padding:0 1px">Smoothing windows</div>
<div class="combo" style="left:1059px;top:333px;width:105px;height:20px;border-color:#707070;background:linear-gradient(#f2f2f2,#ebebeb 50%,#dddddd 51%,#cfcfcf)"></div>
<div class="t s2" style="left:1063px;top:335px;font-size:11px;line-height:13px">Hanning</div>
<div class="a" style="left:1151px;top:341px;width:0;height:0;border-left:4px solid transparent;border-right:4px solid transparent;border-top:5px solid #000"></div>
<div class="grp" style="left:1236px;top:116px;width:60px;height:105px"></div>
<div class="t s2" style="left:1242px;top:108px;font-size:11px;line-height:13px;background:#fcfcfc;padding:0 1px">Function</div>
<div class="cb" style="left:1243px;top:124px;"></div>
<div class="t s2" style="left:1259px;top:122px;font-size:11px;line-height:13px;color:#000">Peak</div>
<div class="cb" style="left:1243px;top:140px;opacity:0.55"></div>
<div class="t s2" style="left:1259px;top:138px;font-size:11px;line-height:13px;color:#9a9a9a">Spec</div>
<div class="cb" style="left:1243px;top:156px;opacity:0.55"></div>
<div class="t s2" style="left:1259px;top:154px;font-size:11px;line-height:13px;color:#9a9a9a">Osci</div>
<div class="cb" style="left:1243px;top:172px;"></div>
<div class="t s2" style="left:1259px;top:170px;font-size:11px;line-height:13px;color:#000">Wav</div>
<div class="cb" style="left:1243px;top:188px;"></div>
<div class="t s2" style="left:1259px;top:186px;font-size:11px;line-height:13px;color:#000">Phas</div>
<div class="cb" style="left:1243px;top:204px;"></div>
<div class="t s2" style="left:1259px;top:202px;font-size:11px;line-height:13px;color:#000">Volt</div>
<div class="btn" style="left:1235px;top:227px;width:60px;height:22px;line-height:20px;text-align:left;padding-left:24px">Che</div>
<div class="grp" style="left:1236px;top:259px;width:60px;height:40px"></div>
<div class="t s2" style="left:1242px;top:251px;font-size:11px;line-height:13px;background:#fcfcfc;padding:0 1px">Delay A</div>
<div class="a" style="left:1242px;top:270px;width:50px;height:21px;border:1px solid #c8c8c8;border-top-color:#abadb3;background:#fff"></div>
<div class="t s2" style="left:1245px;top:273px;font-size:11px;line-height:13px">0</div>
<div class="btn" style="left:1236px;top:305px;width:60px;height:29px;line-height:27px;text-align:left;padding-left:37px">A</div>
<div class="btn" style="left:1235px;top:339px;width:60px;height:21px"></div>
</body></html>
